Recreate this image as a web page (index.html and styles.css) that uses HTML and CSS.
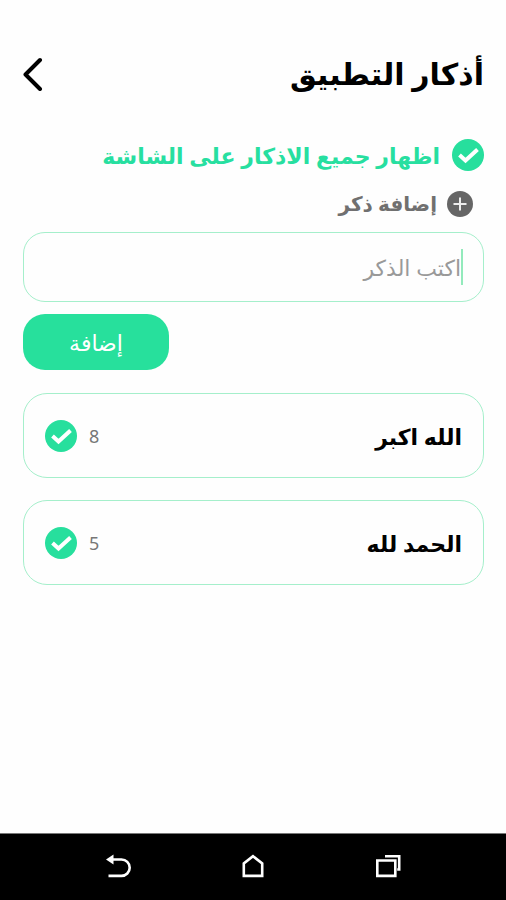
FILE: index.html
```html
<!DOCTYPE html>
<html lang="ar" dir="rtl">
<head>
<meta charset="utf-8">
<meta name="viewport" content="width=device-width, initial-scale=1">
<title>أذكار التطبيق</title>
<link rel="stylesheet" href="styles.css">
</head>
<body>
<main class="screen">
  <header class="header">
    <h1 class="title">أذكار التطبيق</h1>
    <button class="back" type="button" aria-label="رجوع">
      <svg width="20" height="34" viewBox="0 0 20 34" fill="none" stroke="#000" stroke-width="4" stroke-linecap="round" stroke-linejoin="round"><path d="M17 3 2.500 17.500 17 32"/></svg>
    </button>
  </header>

  <label class="show-all">
    <span class="check">
      <input type="checkbox" checked>
      <svg viewBox="0 0 32 32"><circle cx="16" cy="16" r="16"/><path d="M7.500 16 13.500 21.500 25.500 10.500"/></svg>
    </span>
    <span>اظهار جميع الاذكار على الشاشة</span>
  </label>

  <form class="add-form">
    <label class="add-label" for="zikr">
      <svg class="plus" viewBox="0 0 26 26"><circle cx="13" cy="13" r="13"/><path d="M13 6.500v13M6.500 13h13"/></svg>
      <span>إضافة ذكر</span>
    </label>
    <div class="field">
      <span class="caret"></span>
      <input class="field-input" id="zikr" type="text" placeholder="اكتب الذكر">
    </div>
    <button class="submit" type="button">إضافة</button>
  </form>

  <ul class="list">
    <li>
      <label class="item">
        <span class="item-name">الله اكبر</span>
        <span class="item-count">8</span>
        <span class="check">
          <input type="checkbox" checked>
          <svg viewBox="0 0 32 32"><circle cx="16" cy="16" r="16"/><path d="M7.500 16 13.500 21.500 25.500 10.500"/></svg>
        </span>
      </label>
    </li>
    <li>
      <label class="item">
        <span class="item-name">الحمد لله</span>
        <span class="item-count">5</span>
        <span class="check">
          <input type="checkbox" checked>
          <svg viewBox="0 0 32 32"><circle cx="16" cy="16" r="16"/><path d="M7.500 16 13.500 21.500 25.500 10.500"/></svg>
        </span>
      </label>
    </li>
  </ul>
</main>

<nav class="system-bar" aria-label="أزرار النظام">
  <button class="system-button" type="button" aria-label="السابق">
    <svg width="26" height="26" viewBox="0 0 26 26" fill="none" stroke="#fff" stroke-width="2.600"><path d="M7 6.500h9.500a8.200 8.200 0 0 1 0 16.400H3.500"/><path d="M1 6.500 8.500 1.500v10z" fill="#fff" stroke="none"/></svg>
  </button>
  <button class="system-button" type="button" aria-label="الرئيسية">
    <svg width="26" height="26" viewBox="0 0 26 26" fill="none" stroke="#fff" stroke-width="2.600"><path d="M3.800 22.900V10.500L13 3.200l9.200 7.300v12.400z"/></svg>
  </button>
  <button class="system-button" type="button" aria-label="التطبيقات الأخيرة">
    <svg width="26" height="26" viewBox="0 0 26 26" fill="none" stroke="#fff" stroke-width="2.600"><path d="M2.300 7.500h18v15.400h-18z"/><path d="M10 3.200h14.200v13.300h-2" stroke-width="2.600"/></svg>
  </button>
</nav>
</body>
</html>
```
FILE: styles.css
```css
* {
  box-sizing: border-box;
}

body {
  display: flex;
  flex-direction: column;
  min-height: 100vh;
  margin: 0;
  background: #fefefe;
  color: #000;
  font-family: "Noto Sans", "DejaVu Sans", sans-serif;
}

button {
  padding: 0;
  border: 0;
  background: none;
  font-family: inherit;
  cursor: pointer;
}

svg {
  display: block;
}

.screen {
  flex: 1;
  padding: 50px 22px 24px 23px;
}

.header {
  display: flex;
  align-items: center;
  justify-content: space-between;
  height: 48px;
}

.title {
  margin: 0;
  font-size: 30px;
  line-height: 48px;
}

.show-all {
  display: flex;
  align-items: center;
  gap: 12px;
  height: 32px;
  margin-top: 41px;
  color: #27dfa0;
  font-size: 22px;
  font-weight: 700;
  line-height: 32px;
  white-space: nowrap;
}

.check {
  display: grid;
  flex: none;
  width: 32px;
  height: 32px;
}

.check > * {
  grid-area: 1 / 1;
  width: 32px;
  height: 32px;
}

.check input {
  margin: 0;
  opacity: 0;
}

.check circle {
  fill: #27df9d;
}

.check path {
  fill: none;
  stroke: #fff;
  stroke-width: 4;
}

.add-label {
  display: flex;
  align-items: center;
  gap: 10px;
  height: 32px;
  margin-top: 17px;
  padding-right: 11px;
  color: #707070;
  font-size: 20px;
  font-weight: 700;
  line-height: 32px;
}

.plus {
  width: 26px;
  height: 26px;
}

.plus circle {
  fill: #666;
}

.plus path {
  stroke: #eee;
  stroke-width: 2;
}

.field {
  display: flex;
  align-items: center;
  height: 70px;
  margin-top: 12px;
  padding: 0 20px;
  border: 1px solid #a5efcb;
  border-radius: 22px;
}

.caret {
  width: 2px;
  height: 36px;
  background: #93eabc;
}

.field-input {
  flex: 1;
  min-width: 0;
  height: 48px;
  padding: 0;
  border: 0;
  outline: 0;
  background: none;
  font-family: inherit;
  font-size: 22px;
}

.field-input::placeholder {
  color: #999;
}

.submit {
  display: block;
  width: 146px;
  height: 56px;
  margin: 12px auto 0 0;
  border-radius: 22px;
  background: #27e09c;
  color: #fff;
  font-size: 22px;
}

.list {
  display: grid;
  gap: 22px;
  margin: 23px 0 0;
  padding: 0;
  list-style: none;
}

.item {
  display: flex;
  align-items: center;
  gap: 12px;
  height: 85px;
  padding: 0 21px;
  border: 1px solid #a5efcb;
  border-radius: 24px;
}

.item-name {
  flex: 1;
  font-size: 22px;
  font-weight: 700;
}

.item-count {
  color: #777;
  font-size: 18px;
}

.system-bar {
  display: flex;
  justify-content: center;
  gap: 109px;
  height: 67px;
  border-top: 1px solid #777;
  background: #000;
  direction: ltr;
}

.system-button {
  display: grid;
  place-items: center;
  width: 26px;
  height: 64px;
}
```
